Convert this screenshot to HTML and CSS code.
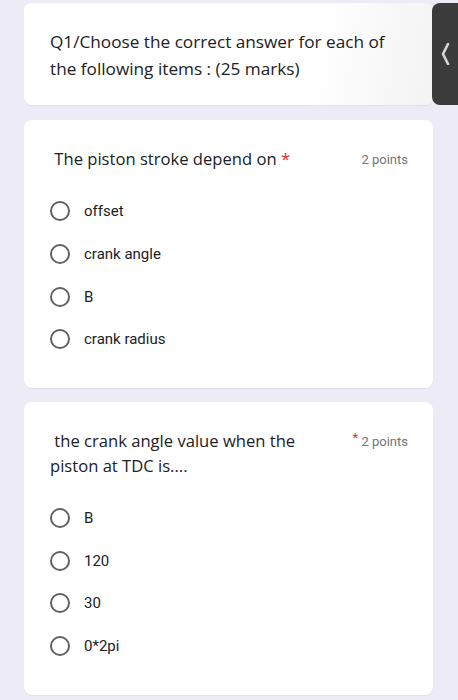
FILE: index.html
```html
<!DOCTYPE html>
<html lang="en">
<head>
  <meta charset="UTF-8" />
  <meta name="viewport" content="width=device-width, initial-scale=1.0"/>
  <title>Quiz</title>
  <link rel="stylesheet" href="styles.css">
</head>
<body>
  <div class="card intro">
    <h1 class="intro-title">Q1/Choose the correct answer for each of the following items : (25 marks)</h1>
  </div>

  <div class="side-tab">
    <svg width="10" height="22" viewBox="0 0 10 22">
      <polyline points="8,1 3,11 8,21" fill="none" stroke="#d6d6d6" stroke-width="2.6" stroke-linecap="round" stroke-linejoin="round"/>
    </svg>
  </div>

  <div class="card question">
    <div class="q-head">
      <div class="q-title"> The piston stroke depend on <span class="req">*</span></div>
      <div class="q-points">2 points</div>
    </div>
    <div class="options">
      <label class="option"><span class="radio"></span>offset</label>
      <label class="option"><span class="radio"></span>crank angle</label>
      <label class="option"><span class="radio"></span>B</label>
      <label class="option"><span class="radio"></span>crank radius</label>
    </div>
  </div>

  <div class="card question">
    <div class="q-head">
      <div class="q-title"> the crank angle value when the piston at TDC is....</div>
      <div class="q-points"><span class="req raised">*</span> 2 points</div>
    </div>
    <div class="options">
      <label class="option"><span class="radio"></span>B</label>
      <label class="option"><span class="radio"></span>120</label>
      <label class="option"><span class="radio"></span>30</label>
      <label class="option"><span class="radio"></span>0*2pi</label>
    </div>
  </div>
</body>
</html>
```

FILE: styles.css
```css
body {
  margin: 0;
  padding: 3px 25px 0 24px;
  background-color: #edebf6;
  font-family: "Open Sans", Roboto, sans-serif;
  color: #202124;
}
.card {
  background-color: #fff;
  border-radius: 8px;
  margin-bottom: 15px;
  box-shadow: 0 1px 1px rgba(0, 0, 0, 0.05);
}
.card.intro {
  padding: 25px 30px 23px 26px;
  background: linear-gradient(100deg, #fff 70%, #f3f3f4 100%);
}
h1.intro-title {
  margin: 0;
  font-size: 17.2px;
  font-weight: 500;
  line-height: 27px;
}
.side-tab {
  position: absolute;
  top: 3px;
  left: 432px;
  width: 26px;
  height: 102px;
  background-color: #3b3b3b;
  border-radius: 8px 0 0 8px;
  display: flex;
  align-items: center;
  justify-content: center;
}
.card.question {
  padding: 26px 25px 27px 26px;
}
.card.question + .card.question {
  margin-top: -1px;
}
.q-head {
  display: flex;
  justify-content: space-between;
  align-items: flex-start;
  gap: 20px;
}
.q-title {
  white-space: pre-wrap;
  font-size: 16.6px;
  line-height: 25px;
  max-width: 262px;
}
.req {
  color: #d93025;
}
.req.raised {
  position: relative;
  top: -4px;
}
.q-points {
  flex-shrink: 0;
  padding-top: 2px;
  font-family: Roboto, sans-serif;
  font-size: 13px;
  line-height: 23px;
  color: #70757a;
}
.options {
  margin-top: 19px;
}
.option {
  display: flex;
  align-items: center;
  height: 42.7px;
  font-family: Roboto, sans-serif;
  font-size: 15px;
  color: #202124;
}
.radio {
  box-sizing: border-box;
  width: 20px;
  height: 20px;
  border: 2px solid #5f6368;
  border-radius: 50%;
  margin-right: 14px;
}
```
